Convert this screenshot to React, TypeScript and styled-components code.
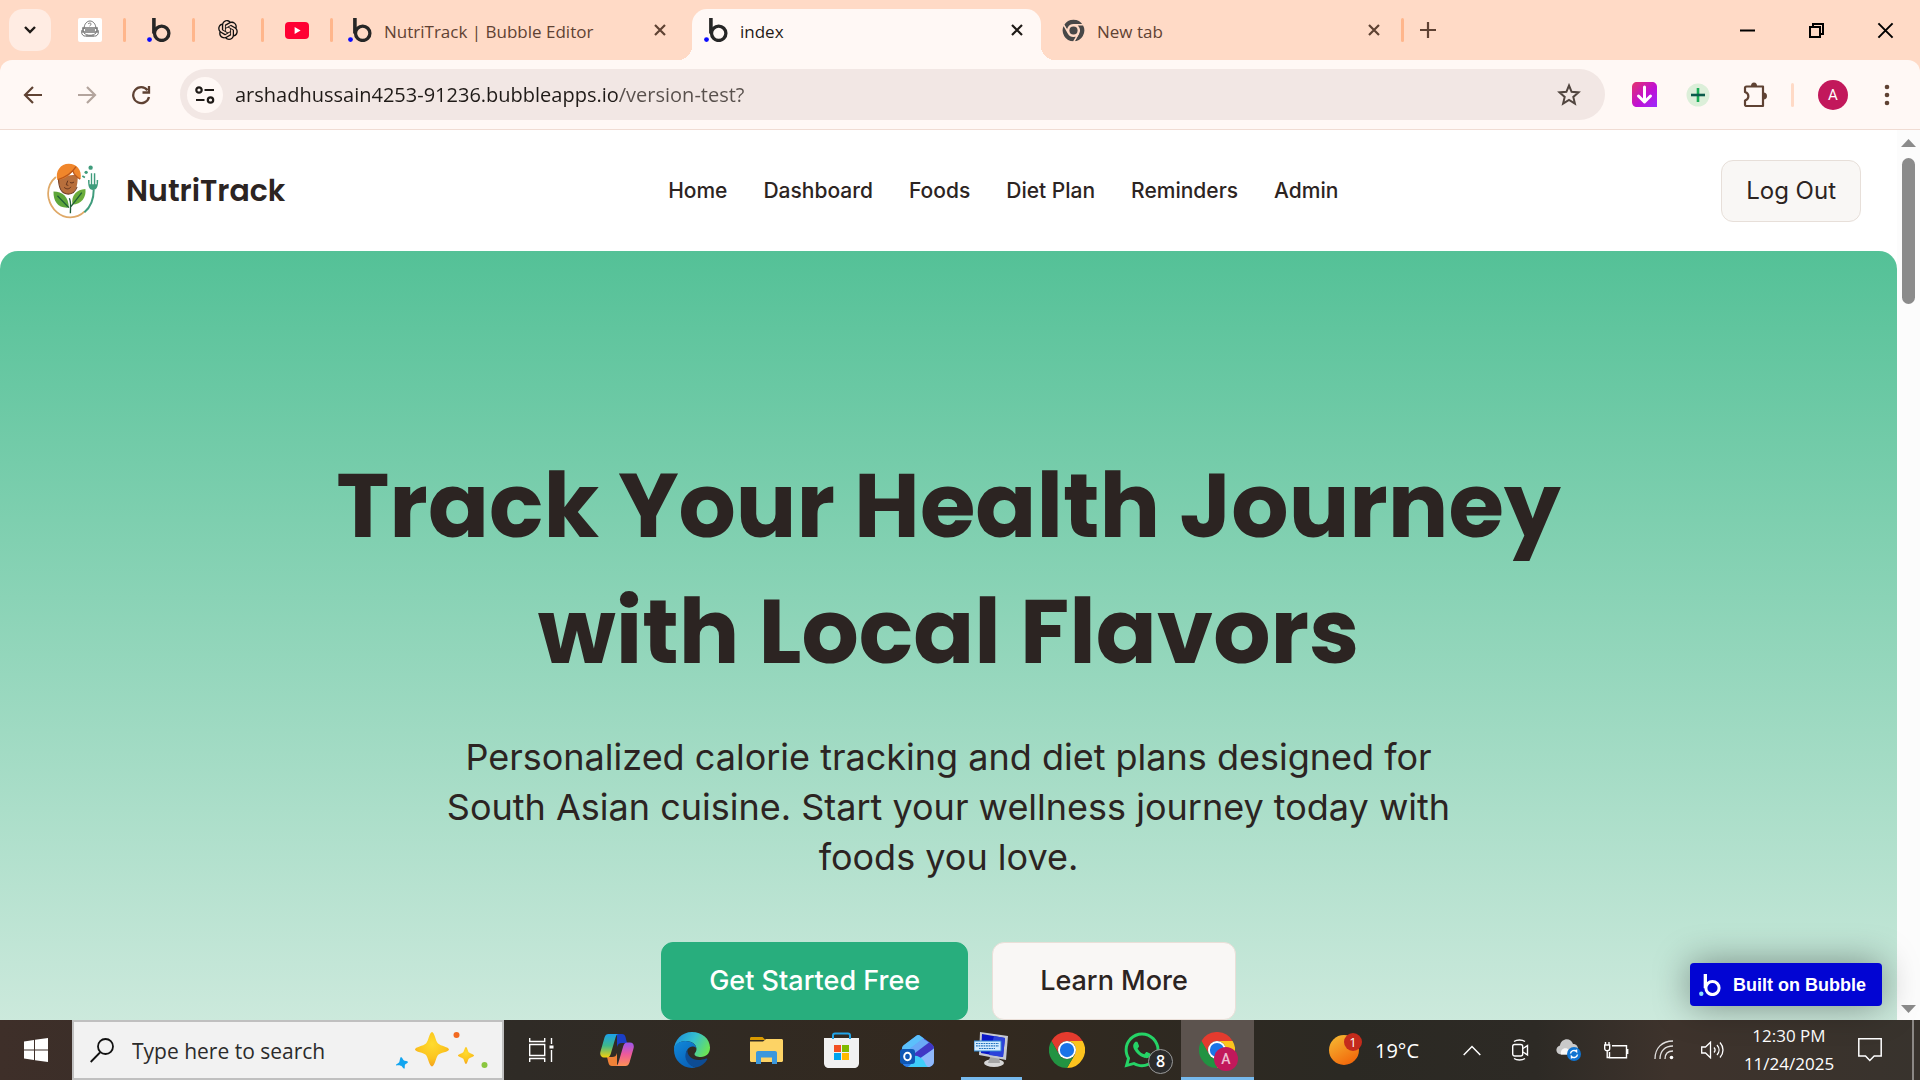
import React from "react";
import styled, { createGlobalStyle, css } from "styled-components";
import { RiOpenaiFill } from "react-icons/ri";
import { FaWhatsapp } from "react-icons/fa";

const ui = `"Segoe UI", "Open Sans", "Noto Sans", sans-serif`;
const body = `Inter, sans-serif`;
const display = `Poppins, Inter, sans-serif`;

const Global = createGlobalStyle`
  *, *::before, *::after { box-sizing: border-box; }
  body { margin: 0; font-family: ${body}; color: #2c2422; }
  button, input { font: inherit; color: inherit; margin: 0; }
  button { border: 0; padding: 0; background: none; cursor: pointer; }
  svg { display: block; flex: none; }
`;

const Screen = styled.div`
  display: flex;
  flex-direction: column;
  height: 100vh;
  overflow: hidden;
`;

/* ---------- browser tab strip ---------- */

const TabStrip = styled.div`
  display: flex;
  align-items: center;
  height: 60px;
  flex: none;
  background: #ffdac6;
  font-family: ${ui};
  font-size: 17px;
  color: #5f4233;
`;

const TabSearch = styled.button`
  display: grid;
  place-items: center;
  width: 42px;
  height: 42px;
  margin: 0 15px 0 9px;
  border-radius: 14px;
  background: #ffece3;
`;

const PinnedTab = styled.button`
  display: grid;
  place-items: center;
  width: 48px;
  height: 42px;
  margin-right: 9px;
`;

const StripRule = styled.span`
  width: 3px;
  height: 24px;
  flex: none;
  border-radius: 2px;
  background: #ffb68c;
`;

const PinnedGap = styled(StripRule)`
  margin-right: 9px;
`;

const Tab = styled.div<{ $active?: boolean; $w: number; $left: number; $right: number }>`
  position: relative;
  display: flex;
  align-items: center;
  width: ${(p) => p.$w}px;
  height: 51px;
  align-self: flex-end;
  padding: 0 ${(p) => p.$right}px 9px ${(p) => p.$left}px;
  ${(p) =>
    p.$active &&
    css`
      background: #fff8f5;
      color: #1f1a17;
      border-radius: 15px 15px 0 0;
      &::before,
      &::after {
        content: "";
        position: absolute;
        bottom: 0;
        width: 14px;
        height: 14px;
      }
      &::before {
        right: 100%;
        background: radial-gradient(circle at 0 0, transparent 14px, #fff8f5 14px);
      }
      &::after {
        left: 100%;
        background: radial-gradient(circle at 100% 0, transparent 14px, #fff8f5 14px);
      }
    `}
`;

const TabLabel = styled.button`
  display: flex;
  align-items: center;
  gap: 12px;
  flex: 1;
  min-width: 0;
  white-space: nowrap;
`;

const TabTitle = styled.span`
  padding-top: 2px;
`;

const TabClose = styled.button`
  display: grid;
  place-items: center;
  width: 24px;
  height: 24px;
`;

const NewTab = styled.button`
  display: grid;
  place-items: center;
  width: 42px;
  height: 42px;
  margin-left: 3px;
`;

const WindowControls = styled.div`
  display: flex;
  margin-left: auto;
`;

const WindowControl = styled.button`
  display: grid;
  place-items: center;
  width: 69px;
  height: 58px;
`;

/* ---------- browser toolbar ---------- */

const ToolbarBack = styled.div`
  flex: none;
  background: #ffdac6;
`;

const Toolbar = styled.div`
  display: flex;
  align-items: center;
  height: 70px;
  padding: 0 11px 0 6px;
  border-bottom: 1px solid #f0dcd3;
  border-radius: 12px 12px 0 0;
  background: #fff8f5;
`;

const ToolButton = styled.button<{ $w?: number }>`
  display: grid;
  place-items: center;
  width: ${(p) => p.$w ?? 54}px;
  height: 48px;
  flex: none;
`;

const Omnibox = styled.div`
  display: flex;
  align-items: center;
  flex: 1;
  height: 51px;
  margin: 0 16px 0 12px;
  padding: 0 12px 0 7px;
  border-radius: 26px;
  background: #f2e7e4;
`;

const SiteInfo = styled.button`
  display: grid;
  place-items: center;
  width: 36px;
  height: 36px;
  flex: none;
  border-radius: 50%;
  background: #fff8f5;
`;

const Address = styled.input`
  flex: 1;
  min-width: 0;
  padding: 0 12px;
  border: 0;
  outline: 0;
  font-family: ${ui};
  font-size: 20px;
  line-height: 30px;
  color: #1f1a17;
  background: linear-gradient(to right, #1f1a17 396px, #58504c 396px);
  -webkit-background-clip: text;
  background-clip: text;
  -webkit-text-fill-color: transparent;
`;

const ToolbarRule = styled(StripRule)`
  margin: 0 8px 0 9px;
  background: #ffdac6;
`;

const Avatar = styled.span`
  display: grid;
  place-items: center;
  width: 30px;
  height: 30px;
  border-radius: 50%;
  background: #c2185b;
  color: #fff;
  font: 15px/30px Roboto, sans-serif;
`;

/* ---------- web page ---------- */

const Viewport = styled.div`
  position: relative;
  display: flex;
  flex: 1;
  min-height: 0;
  background: #fff;
`;

const Page = styled.div`
  flex: 1;
  min-width: 0;
  overflow: hidden;
`;

const Header = styled.header`
  display: flex;
  justify-content: space-between;
  align-items: center;
  height: 121px;
  padding: 0 36px 0 47px;
`;

const Brand = styled.a`
  display: flex;
  align-items: center;
  gap: 26px;
  color: inherit;
  text-decoration: none;
  font: 600 30px/44px ${display};
`;

const Menu = styled.nav`
  display: flex;
  gap: 36px;
`;

const MenuLink = styled.a`
  color: inherit;
  text-decoration: none;
  font: 500 21px/30px ${body};
`;

const LogOut = styled.button`
  height: 62px;
  padding: 0 24px;
  border: 1px solid #e7dfd9;
  border-radius: 12px;
  background: #f9f7f5;
  font: 400 24px/36px ${body};
`;

const Hero = styled.section`
  display: flex;
  flex-direction: column;
  align-items: center;
  padding: 192px 24px 190px;
  border-radius: 18px 18px 0 0;
  background: linear-gradient(#54c197, #cce9dc 770px);
  text-align: center;
`;

const Headline = styled.h1`
  max-width: 1300px;
  margin: 0;
  font: 700 90px/126px ${display};
  color: #2c2422;
`;

const Lead = styled.p`
  max-width: 1040px;
  margin: 37px 0 60px;
  font: 400 36px/50px ${body};
`;

const Actions = styled.div`
  display: flex;
  gap: 24px;
`;

const Action = styled.button<{ $primary?: boolean }>`
  height: 78px;
  padding: 0 47px;
  border: 1px solid ${(p) => (p.$primary ? "#28ae7d" : "#eadfd8")};
  border-radius: 12px;
  background: ${(p) => (p.$primary ? "#28ae7d" : "#f9f7f5")};
  color: ${(p) => (p.$primary ? "#fff" : "#2c2422")};
  font: 500 27px/40px ${body};
`;

const BubbleBadge = styled.a`
  position: absolute;
  right: 38px;
  bottom: 14px;
  display: flex;
  align-items: center;
  gap: 12px;
  height: 43px;
  padding: 0 16px 0 9px;
  border-radius: 4px;
  background: #0205d3;
  box-shadow: 0 0 36px rgba(0, 0, 0, 0.4);
  color: #fff;
  text-decoration: none;
  white-space: nowrap;
  font: 700 18px/24px "Liberation Sans", Arial, sans-serif;
`;

const Scrollbar = styled.div`
  display: flex;
  flex-direction: column;
  align-items: center;
  width: 23px;
  padding: 9px 0 7px;
  flex: none;
  background: #fcfcfc;
`;

const Thumb = styled.div`
  width: 13px;
  height: 146px;
  margin: 11px 0 auto;
  border-radius: 7px;
  background: #8b8b8b;
`;

/* ---------- taskbar ---------- */

const Taskbar = styled.footer`
  display: flex;
  align-items: stretch;
  height: 60px;
  flex: none;
  background: linear-gradient(to right, #3e2f29 0, #2f2b26 27%, #33291f 50%, #2b2923 70%, #2d2a25 80%, #3e332c 87%, #38332d 100%);
  color: #fff;
  font-family: ${ui};
`;

const Start = styled.button`
  display: grid;
  place-items: center;
  width: 72px;
`;

const SearchBox = styled.label`
  display: flex;
  align-items: center;
  width: 432px;
  padding: 0 14px 0 16px;
  border: 2px solid #c0c0c0;
  background: #f2f2f2;
`;

const SearchInput = styled.input`
  flex: 1;
  min-width: 0;
  padding: 2px 0 0 18px;
  border: 0;
  outline: 0;
  background: none;
  font-size: 21px;
  line-height: 30px;
  &::placeholder {
    color: #2b2b2b;
    opacity: 1;
  }
`;

const TaskButton = styled.button<{ $open?: boolean; $active?: boolean }>`
  position: relative;
  display: grid;
  place-items: center;
  width: 75px;
  ${(p) =>
    p.$active &&
    css`
      background: linear-gradient(to right, transparent 2px, #5c534e 2px);
    `}
  ${(p) =>
    (p.$open || p.$active) &&
    css`
      &::after {
        content: "";
        position: absolute;
        left: ${p.$active ? 2 : 7}px;
        right: ${p.$active ? 0 : 7}px;
        bottom: 0;
        height: 3px;
        background: #76b9ed;
      }
    `}
`;

const CountBadge = styled.span`
  position: absolute;
  left: 44px;
  top: 29px;
  width: 25px;
  height: 25px;
  border: 1px solid #9a9a9a;
  border-radius: 50%;
  background: #2b2b2b;
  font-size: 16px;
  font-weight: 600;
  line-height: 23px;
  text-align: center;
`;

const ProfileBadge = styled(CountBadge)`
  left: 35px;
  top: 27px;
  width: 24px;
  height: 24px;
  border: 0;
  background: #c2185b;
  color: #eebdd0;
  font: 500 14px/24px Roboto, sans-serif;
`;

const Tray = styled.div`
  display: flex;
  align-items: center;
  margin-left: auto;
`;

const Weather = styled.button`
  display: flex;
  align-items: center;
  gap: 13px;
  height: 60px;
  padding-right: 29px;
  font-size: 20px;
`;

const TrayButton = styled.button`
  display: grid;
  place-items: center;
  width: 48px;
  height: 60px;
`;

const Clock = styled.button`
  width: 106px;
  height: 60px;
  font-size: 17px;
  line-height: 28px;
  text-align: center;
`;

const Notices = styled(TrayButton)`
  width: 56px;
  margin-right: 14px;
`;

const ShowDesktop = styled.button`
  width: 8px;
  height: 60px;
  border-left: 2px solid #8b8885;
`;

/* ---------- drawings ---------- */

const BubbleMark = ({ ink = "#262626", dot = "#0a0aff", size = 24 }) => (
  <svg width={size} height={size} viewBox="0 0 24 24" fill="none">
    <circle cx="2.5" cy="21.6" r="2.4" fill={dot} />
    <path d="M6.9 0v15.5" stroke={ink} strokeWidth="3.6" />
    <circle cx="14.7" cy="15.3" r="7.2" stroke={ink} strokeWidth="3.3" />
  </svg>
);

const Cross = ({ c = "#5f4233", s = 12, w = 2.2 }) => (
  <svg width={s} height={s} viewBox="0 0 12 12" stroke={c} strokeWidth={w}>
    <path d="M1 1l10 10M11 1L1 11" />
  </svg>
);

const ChatBotMark = () => (
  <svg width="24" height="24" viewBox="0 0 24 24" fill="none" stroke="#777" strokeWidth="1">
    <rect width="24" height="24" rx="2" fill="#fff" stroke="none" />
    <path d="M6 11c0-5 3-8 6-8s6 3 6 8" />
    <path d="M10 6c1-1.500 4-1 3 .6L11.500 8" />
    <path d="M5 10h14v4H5zM7 12h10" strokeWidth="1.600" />
    <path d="M4 12c-1 3 0 5 2 6h12c2-1 3-3 2-6M6 15c3 3 9 3 12 0M8 18h8" />
  </svg>
);

const YouTubeMark = () => (
  <svg width="24" height="17" viewBox="0 0 24 17">
    <rect width="24" height="17" rx="4" fill="#ff0033" />
    <path d="M9.600 5v7l6-3.500z" fill="#fff" />
  </svg>
);

const ChromeMark = ({ size = 36, mono = false }) => {
  const line = mono ? { stroke: "#ffdac6", strokeWidth: 3 } : {};
  return (
    <svg width={size} height={size} viewBox="0 0 48 48">
      <path {...line} fill={mono ? "#474747" : "#e33b2e"} d="M24 12h20.800A24 24 0 0 0 3.200 12l10.400 18A12 12 0 0 1 24 12z" />
      <path {...line} fill={mono ? "#474747" : "#fcc31e"} d="M34.400 30L24 48a24 24 0 0 0 20.800-36H24a12 12 0 0 1 10.400 18z" />
      <path {...line} fill={mono ? "#474747" : "#229342"} d="M13.600 30L3.200 12A24 24 0 0 0 24 48l10.400-18a12 12 0 0 1-20.800 0z" />
      <circle cx="24" cy="24" r="12" fill={mono ? "#ffdac6" : "#fff"} />
      <circle cx="24" cy="24" r={mono ? 8.5 : 9.5} fill={mono ? "#474747" : "#1a73e8"} />
    </svg>
  );
};

const NutriLogo = () => (
  <svg width="53" height="56" viewBox="0 0 51 54" fill="none">
    <path d="M8.500 13.500C2 19 0 26 1.500 34 4 45 13 52.500 22.500 52.500c5 0 10-2 13.500-5.500" stroke="#dfa968" strokeWidth="1.700" />
    <path d="M36 47.500c6-5 9-12 9-22" stroke="#3f9c7c" strokeWidth="1.900" />
    <path d="M39.500 16.500c0 8 2 9.500 4.800 9.500s5-1.500 5-9.500h-1.500v4h-1.300V10h-1.400v10.500h-1.600V10h-1.300v10.500h-1.200v-4z" fill="#3f9c7c" />
    <circle cx="42" cy="4.500" r="2.100" fill="#3f9c7c" />
    <circle cx="37.700" cy="9" r="1.600" fill="#3f9c7c" />
    <path d="M34 12.500l2.500 1.500" stroke="#3f9c7c" strokeWidth="1.600" />
    <path d="M11 13c0 10 3 17 9.500 17S30 23 29.500 11z" fill="#b86f3c" />
    <path d="M11 14c0 10 3 16 9.500 16 4 0 7-3 8.500-7" stroke="#6e3a20" strokeWidth="1" />
    <path d="M22 18.500c1 1 3 1 4-.3M16.500 23.500c2 2 5 2 6.500-.5M20 17l-1.500 4 2 .6" stroke="#5d2f1b" strokeWidth=".9" />
    <path d="M10 16.500C7.500 8 13 .7 21 .7 28 .7 34 6 32.300 15.500c-4-2-6-5.500-7.300-7.500-3 4-9 8-15 8.500z" fill="#f0862b" />
    <path d="M10.500 16C17 14 24 9.500 28 3.500M25 8c1 3 4 6 7 7.500" stroke="#b9561a" strokeWidth="1.200" />
    <path d="M6.200 27.500c9 0 14.500 5 14.800 15.500C10.500 44 6 37 6.200 27.500z" fill="#5da63a" />
    <path d="M37 25c1 8-4 15-12.500 15C23 31 28.500 25.500 37 25z" fill="#6aad3b" />
    <path d="M10 31.500l11 11.500M33.500 28.500L23 42M21.500 34c2 4 1 9 1 14.500" stroke="#1f5e38" strokeWidth="1.300" />
  </svg>
);

const EdgeMark = () => (
  <svg width="36" height="36" viewBox="0 0 36 36">
    <defs>
      <linearGradient id="edgeTop" x1="0" y1="0.2" x2="1" y2="0.6">
        <stop offset="0" stopColor="#1b8fdc" />
        <stop offset=".5" stopColor="#35bfd0" />
        <stop offset="1" stopColor="#6be356" />
      </linearGradient>
      <linearGradient id="edgeBody" x1="0" y1="0" x2=".6" y2="1">
        <stop offset="0" stopColor="#1089da" />
        <stop offset="1" stopColor="#0a62b8" />
      </linearGradient>
    </defs>
    <path d="M0 18C0 8 8 0 18 0s18 7 18 15.500c0 6-4 9.500-9 9.500-4 0-6.500-1.200-6.500-3 0-1 2-2 2-5 0-4-4-8-10.500-8C5 9 1 13 0 18z" fill="url(#edgeTop)" />
    <path d="M0 18C0 12.500 5 9 11.500 9c6 0 10 3 10.900 7C17 12 12 17 12 22.500 12 29 16 34 22 35.500 10 38 0 29 0 18z" fill="url(#edgeBody)" />
    <path d="M13.500 17.500C8 25 14 35 23 35.300c4-1 8-4 10.200-7.800.5-1-.4-1.300-1.200-1C22 30.500 12.500 26 13.500 17.500z" fill="#0d4c94" />
  </svg>
);

const CopilotMark = () => (
  <svg width="34" height="32" viewBox="0 0 34 32">
    <defs>
      <linearGradient id="copA" x1="0" y1="0" x2="0" y2="1">
        <stop offset="0" stopColor="#1ba0ea" />
        <stop offset=".5" stopColor="#3fb88a" />
        <stop offset="1" stopColor="#f5d10d" />
      </linearGradient>
      <linearGradient id="copB" x1="0" y1="0" x2="0" y2="1">
        <stop offset="0" stopColor="#9a55ee" />
        <stop offset=".5" stopColor="#ee5a9a" />
        <stop offset="1" stopColor="#fd9155" />
      </linearGradient>
    </defs>
    <path d="M17 0h5c2 0 3 1 3.500 3l1.500 6h-5c-3 0-4 1-5 4z" fill="#1a3fc6" />
    <path d="M17 32h-5c-2 0-3-1-3.500-3L7 23h5c3 0 4-1 5-4z" fill="#f08238" />
    <path d="M8.500 0h10.200c-1.500 0-2.400 1-3 3l-5 17c-.8 2.500-2 3.500-4 3.500H4C1 23.500-.5 21 .5 17.500l4-14C5.300 1 6.500 0 8.500 0z" fill="url(#copA)" />
    <path d="M25.500 32H15.300c1.500 0 2.400-1 3-3l5-17c.8-2.500 2-3.500 4-3.500H30c3 0 4.500 2.500 3.500 6l-4 14c-.8 2.500-2 3.500-4 3.500z" fill="url(#copB)" />
  </svg>
);

const FolderMark = () => (
  <svg width="33" height="27" viewBox="0 0 33 27">
    <path d="M0 1.500C0 .6.600 0 1.500 0h11l3 3H0z" fill="#d99a00" />
    <path d="M0 4.500h13l3-2.500h15.500c.9 0 1.500.6 1.500 1.500v20c0 .9-.6 1.500-1.500 1.500h-30C.6 25 0 24.400 0 23.500z" fill="#fdd365" />
    <path d="M6 27V16c0-1.200.8-2 2-2h17c1.200 0 2 .8 2 2v11h-5v-6.500H11V27z" fill="#3b97dc" />
  </svg>
);

const StoreMark = () => (
  <svg width="35" height="36" viewBox="0 0 35 36">
    <path d="M9 9V3.500C9 2 9.500 1.500 11 1.500h13c1.500 0 2 .5 2 2V9" fill="none" stroke="#22a4e8" strokeWidth="2" />
    <path d="M0 6h35v25c0 3-2 5-5 5H5c-3 0-5-2-5-5z" fill="#f1f1f1" />
    <path d="M9 7V4M26 7V4" stroke="#22a4e8" strokeWidth="2" />
    <path d="M10 13h7v7h-7z" fill="#f25022" />
    <path d="M18 13h7v7h-7z" fill="#7fba00" />
    <path d="M10 21h7v7h-7z" fill="#00a4ef" />
    <path d="M18 21h7v7h-7z" fill="#ffb900" />
  </svg>
);

const OutlookMark = () => (
  <svg width="34" height="33" viewBox="0 0 34 33">
    <path d="M2 13L16 2c1.500-1.200 3-1.200 4.500 0L31 9.500c2 1.500 3 3 3 5.500v12c0 3.500-2.500 6-6 6H8c-3.500 0-6-2.500-6-6z" fill="#2b7de9" />
    <path d="M2 16c0-3 .5-4 2.500-5.500L16 2c1.500-1.200 3-1.200 4.500 0L24 4.500 6 18z" fill="#5cc0fb" />
    <path d="M24 4.500l7 5c3.500 2.500 4 5 0 7.500L17 26l-9-6.500z" fill="#4136c4" />
    <path d="M6 17.500L23 4.500l6 4L11 22z" fill="#6aa9f7" />
    <path d="M34 14.500V27c0 3.500-2.500 6-6 6H8z" fill="#8fb8fb" />
    <path d="M12 22c5-1 9 1 12 5 1.500 3 2 5 4 6H8c3-1 4-5 4-11z" fill="#3fcdfa" />
    <rect y="15" width="15" height="15" rx="3" fill="#0f57b5" />
    <ellipse cx="7.500" cy="22.500" rx="3.300" ry="3.800" fill="none" stroke="#fff" strokeWidth="2" />
  </svg>
);

const MonitorMark = () => (
  <svg width="36" height="36" viewBox="0 0 36 36">
    <ellipse cx="20" cy="31" rx="10" ry="4" fill="#d6d6d6" />
    <path d="M16 25h9l1 6H14z" fill="#a5a5a5" />
    <path d="M6 0l28 4-2 24L5 23z" fill="#c5c8d0" />
    <path d="M8 2l23 4-2 19L7 21z" fill="#0a16c8" />
    <path d="M20 4l11 2-2 19-14-2z" fill="#2c42da" />
    <path d="M0 9h27v10H0z" fill="#d5ecff" stroke="#2e86d0" />
    <path d="M2 11.500h23M2 13.900h23M5 16.500h16" stroke="#2476c0" strokeWidth="1.200" strokeDasharray="1.800 .7" />
  </svg>
);

const Sparkles = () => (
  <svg width="92" height="40" viewBox="0 0 92 40">
    <defs>
      <radialGradient id="gold" cx=".5" cy=".35" r=".7">
        <stop offset="0" stopColor="#ffdb2e" />
        <stop offset=".6" stopColor="#fbc41f" />
        <stop offset="1" stopColor="#f39a1d" />
      </radialGradient>
    </defs>
    <path d="M36 2c2.500 0 3.500 9 6 11.500S53 17 53 19.500 44 22.500 42 25s-3.500 11.500-6 11.500-4-9-6-11.500-11-3-11-5.500 8.500-3.500 11-6S33.500 2 36 2z" fill="url(#gold)" />
    <path d="M70 17c1.300 0 1.800 4.500 3 5.500s5 1.800 5 3-3.800 2-5 3-1.700 5.500-3 5.500-1.800-4.500-3-5.500-5-1.800-5-3 3.800-2 5-3 1.700-5.500 3-5.500z" fill="url(#gold)" />
    <path d="M5 27c1 0 2 3 3 3.500s4 .5 4 1.500-2.500 1.800-3 2.800.2 4-.8 4-2-2.500-3-3S0 36 0 35s2.500-1.800 3.200-2.800S4 27 5 27z" fill="#12a5f0" />
    <circle cx="60.500" cy="5" r="3" fill="#f26a21" />
    <circle cx="88.500" cy="35" r="3" fill="#8ac63f" />
  </svg>
);

/* ---------- app ---------- */

const links = ["Home", "Dashboard", "Foods", "Diet Plan", "Reminders", "Admin"];

const pinned = [
  { name: "Assistant", icon: <ChatBotMark /> },
  { name: "Bubble", icon: <BubbleMark /> },
  { name: "ChatGPT", icon: <RiOpenaiFill size={24} color="#111" /> },
  { name: "YouTube", icon: <YouTubeMark /> },
];

const Browser = () => (
  <>
    <TabStrip>
      <TabSearch aria-label="Search tabs">
        <svg width="12" height="8" viewBox="0 0 12 8" fill="none" stroke="#1f1a17" strokeWidth="2.400"><path d="M1 1l5 5 5-5" /></svg>
      </TabSearch>
      {pinned.map((t) => (
        <React.Fragment key={t.name}>
          <PinnedTab aria-label={t.name}>{t.icon}</PinnedTab>
          <PinnedGap />
        </React.Fragment>
      ))}
      <Tab $w={350} $left={6} $right={20}>
        <TabLabel><BubbleMark /><TabTitle>NutriTrack | Bubble Editor</TabTitle></TabLabel>
        <TabClose aria-label="Close NutriTrack tab"><Cross /></TabClose>
      </Tab>
      <Tab $active $w={349} $left={12} $right={12}>
        <TabLabel><BubbleMark /><TabTitle>index</TabTitle></TabLabel>
        <TabClose aria-label="Close index tab"><Cross c="#1f1a17" /></TabClose>
      </Tab>
      <Tab $w={360} $left={21} $right={15}>
        <TabLabel><ChromeMark size={23} mono /><TabTitle>New tab</TabTitle></TabLabel>
        <TabClose aria-label="Close new tab"><Cross /></TabClose>
      </Tab>
      <StripRule />
      <NewTab aria-label="New tab">
        <svg width="16" height="16" stroke="#5f4233" strokeWidth="2.200"><path d="M8 0v16M0 8h16" /></svg>
      </NewTab>
      <WindowControls>
        <WindowControl aria-label="Minimize">
          <svg width="15" height="15"><path d="M0 6.500h15v2H0z" /></svg>
        </WindowControl>
        <WindowControl aria-label="Restore">
          <svg width="15" height="15" fill="none" stroke="#000" strokeWidth="2"><path d="M1 4h10v10H1zM4 4V1h10v10h-3" /></svg>
        </WindowControl>
        <WindowControl aria-label="Close"><Cross c="#000" s={17} w={1.4} /></WindowControl>
      </WindowControls>
    </TabStrip>
    <ToolbarBack>
      <Toolbar>
        <ToolButton aria-label="Back">
          <svg width="20" height="18" fill="none" stroke="#5f4233" strokeWidth="2.200"><path d="M19 9H2M10 1L2 9l8 8" /></svg>
        </ToolButton>
        <ToolButton aria-label="Forward">
          <svg width="20" height="18" fill="none" stroke="#b3a49d" strokeWidth="2.200"><path d="M1 9h17M10 1l8 8-8 8" /></svg>
        </ToolButton>
        <ToolButton aria-label="Reload">
          <svg width="20" height="20" fill="none" stroke="#5f4233" strokeWidth="2.300"><path d="M16.500 5.200A8 8 0 1 0 18 12M18 1v6.500h-6.500" /></svg>
        </ToolButton>
        <Omnibox>
          <SiteInfo aria-label="Site information">
            <svg width="20" height="18" fill="none" stroke="#1f1a17" strokeWidth="2.200">
              <circle cx="4" cy="4" r="2.700" /><path d="M9.500 4H19M1 14h8.500" /><circle cx="15.500" cy="14" r="2.700" />
            </svg>
          </SiteInfo>
          <Address aria-label="Address" defaultValue="arshadhussain4253-91236.bubbleapps.io/version-test?" />
          <ToolButton $w={48} aria-label="Bookmark">
            <svg width="24" height="23" viewBox="0 0 24 23" fill="none" stroke="#51453f" strokeWidth="2"><path d="M12 2.500l2.600 6.300 6.900.6-5.200 4.500 1.600 6.700-5.900-3.600-5.900 3.600 1.600-6.700-5.200-4.500 6.900-.6z" /></svg>
          </ToolButton>
        </Omnibox>
        <ToolButton $w={47} aria-label="Downloader">
          <svg width="25" height="25" viewBox="0 0 25 25" fill="none">
            <defs><linearGradient id="dl" x1="0" y1="0" x2="1" y2="1"><stop offset="0" stopColor="#e5356b" /><stop offset=".55" stopColor="#c010d2" /><stop offset="1" stopColor="#9a2bff" /></linearGradient></defs>
            <path d="M5 0h15c3 0 5 2 5 5v20H5c-3 0-5-2-5-5V5c0-3 2-5 5-5z" fill="url(#dl)" />
            <path d="M12.500 5v14M6.500 14l6 6 6-6" stroke="#fff" strokeWidth="3" strokeLinecap="round" strokeLinejoin="round" />
          </svg>
        </ToolButton>
        <ToolButton $w={60} aria-label="Add">
          <svg width="24" height="24"><circle cx="12" cy="12" r="11.500" fill="#dcefd9" /><path d="M12 5v14" stroke="#18ab55" strokeWidth="2.600" /><path d="M5 12h14" stroke="#0b5a4a" strokeWidth="2.600" /></svg>
        </ToolButton>
        <ToolButton aria-label="Extensions">
          <svg width="25" height="26" viewBox="0 0 25 26">
            <path d="M3.500 4.500H20V24H3.500c-.8 0-1.500-.5-1.500-1.300V18.500C6.500 17 6.500 11.500 2 10V6c0-.9.600-1.500 1.500-1.500z" fill="none" stroke="#5f4233" strokeWidth="2.200" strokeLinejoin="round" />
            <path d="M8 4a3 3.500 0 0 1 6 0zM20.500 10.500a3.500 3.500 0 0 1 0 7z" fill="#5f4233" />
          </svg>
        </ToolButton>
        <ToolbarRule />
        <ToolButton $w={62} aria-label="Profile"><Avatar>A</Avatar></ToolButton>
        <ToolButton $w={45} aria-label="Menu">
          <svg width="6" height="22" fill="#5f4233"><circle cx="3" cy="3" r="2.300" /><circle cx="3" cy="11" r="2.300" /><circle cx="3" cy="19" r="2.300" /></svg>
        </ToolButton>
      </Toolbar>
    </ToolbarBack>
  </>
);

const Site = () => (
  <Viewport>
    <Page>
      <Header>
        <Brand href="#"><NutriLogo />NutriTrack</Brand>
        <Menu>
          {links.map((l) => <MenuLink href="#" key={l}>{l}</MenuLink>)}
        </Menu>
        <LogOut>Log Out</LogOut>
      </Header>
      <Hero>
        <Headline>Track Your Health Journey with Local Flavors</Headline>
        <Lead>
          Personalized calorie tracking and diet plans designed for South Asian cuisine. Start your wellness journey today with foods you love.
        </Lead>
        <Actions>
          <Action $primary>Get Started Free</Action>
          <Action>Learn More</Action>
        </Actions>
      </Hero>
    </Page>
    <Scrollbar>
      <svg width="15" height="8" fill="#8b8b8b"><path d="M7.500 0L15 8H0z" /></svg>
      <Thumb />
      <svg width="15" height="8" fill="#8b8b8b"><path d="M0 0h15L7.500 8z" /></svg>
    </Scrollbar>
    <BubbleBadge href="#"><BubbleMark ink="#fff" dot="#8fe3ff" size={22} />Built on Bubble</BubbleBadge>
  </Viewport>
);

const Desktop = () => (
  <Taskbar>
    <Start aria-label="Start">
      <svg width="24" height="24" fill="#fff"><path d="M0 3.500L10 2v9.500H0zM11 1.800L24 0v11.500H11zM0 12.500h10V22L0 20.500zM11 12.500h13V24l-13-1.800z" /></svg>
    </Start>
    <SearchBox>
      <svg width="24" height="25" fill="none" stroke="#111" strokeWidth="1.800"><circle cx="15.500" cy="8.500" r="7.500" /><path d="M10 14.500L.7 24" /></svg>
      <SearchInput aria-label="Search" placeholder="Type here to search" />
      <Sparkles />
    </SearchBox>
    <TaskButton aria-label="Task view">
      <svg width="25" height="24" fill="none" stroke="#fff" strokeWidth="1.400"><path d="M.7 0v3.500h15V0M.7 6.500h15v11H.7zM.7 24v-3.500h15V24M22.500 0v6M22.500 12v12" /><path d="M20.500 7.500h4v3h-4z" fill="#fff" stroke="none" /></svg>
    </TaskButton>
    <TaskButton aria-label="Copilot"><CopilotMark /></TaskButton>
    <TaskButton aria-label="Edge"><EdgeMark /></TaskButton>
    <TaskButton aria-label="File Explorer"><FolderMark /></TaskButton>
    <TaskButton aria-label="Store"><StoreMark /></TaskButton>
    <TaskButton aria-label="Outlook"><OutlookMark /></TaskButton>
    <TaskButton $open aria-label="On-screen keyboard"><MonitorMark /></TaskButton>
    <TaskButton aria-label="Chrome"><ChromeMark /></TaskButton>
    <TaskButton aria-label="WhatsApp">
      <FaWhatsapp size={40} color="#25d366" />
      <CountBadge>8</CountBadge>
    </TaskButton>
    <TaskButton $active aria-label="Chrome, profile A">
      <ChromeMark />
      <ProfileBadge>A</ProfileBadge>
    </TaskButton>
    <Tray>
      <Weather>
        <svg width="33" height="34" viewBox="0 0 33 34">
          <defs><linearGradient id="sun" x1="0" y1="0" x2=".6" y2="1"><stop offset="0" stopColor="#f5bd35" /><stop offset="1" stopColor="#f26a0c" /></linearGradient></defs>
          <circle cx="15" cy="17" r="15" fill="url(#sun)" />
          <circle cx="24" cy="9" r="9" fill="#c42b1c" />
          <text x="24" y="14" fill="#fff" fontSize="13" textAnchor="middle">1</text>
        </svg>
        19°C
      </Weather>
      <TrayButton aria-label="Show hidden icons">
        <svg width="18" height="11" fill="none" stroke="#fff" strokeWidth="1.500"><path d="M.7 10L9 1.500l8.300 8.500" /></svg>
      </TrayButton>
      <TrayButton aria-label="Meet now">
        <svg width="17" height="22" fill="none" stroke="#fff" strokeWidth="1.400"><rect x=".7" y="5.500" width="10" height="11.500" rx="2" /><path d="M11 9.500l4.500-3v9.500l-4.500-3M2 2.500c3-2 8-2 11 0M2 19.500c3 2 8 2 11 0" /></svg>
      </TrayButton>
      <TrayButton aria-label="OneDrive">
        <svg width="25" height="22" viewBox="0 0 25 22"><path d="M5 15.500C-1 15-1 8 4 6.500 5-1 15-2 17 5c5 0 6 5 4 8l-5 2.500z" fill="#c9c9c9" /><path d="M5 15.500c-1-4 2-7 6-6l6 4-4 2z" fill="#f7f7f7" /><circle cx="18" cy="15" r="7" fill="#0f74d1" /><path d="M14.500 14.500c.5-3 4-4 6-2v-2M21.500 15.500c-.5 3-4 4-6 2v2" fill="none" stroke="#fff" strokeWidth="1.500" /></svg>
      </TrayButton>
      <TrayButton aria-label="Battery">
        <svg width="25" height="17" fill="none" stroke="#fff" strokeWidth="1.400"><path d="M8 3.700H22.500v12h-17V10M23.700 7v5M1.500 0v3M5 0v3M.7 3h5v3.500c0 3-5 3-5 0zM3.200 9v6.500h2" /></svg>
      </TrayButton>
      <TrayButton aria-label="Network">
        <svg width="20" height="20" fill="none" stroke="#fff" strokeWidth="1.300"><path d="M1 19C1 8 8 1 19 1M6 19c0-8 5-13 13-13M11 19c0-5 3-8 8-8" opacity=".85" /><circle cx="17.500" cy="17.500" r="1.800" fill="#fff" stroke="none" /></svg>
      </TrayButton>
      <TrayButton aria-label="Volume">
        <svg width="23" height="18" fill="none" stroke="#fff" strokeWidth="1.300"><path d="M.7 6h3.800l5-4.800v15.600l-5-4.800H.7zM13 6.500c1.300 1.500 1.300 3.500 0 5M16 4c2.700 3 2.700 7 0 10M19 1.500c4 4.500 4 10.500 0 15" /></svg>
      </TrayButton>
      <Clock>12:30 PM<br />11/24/2025</Clock>
      <Notices aria-label="Notifications">
        <svg width="24" height="24" fill="none" stroke="#fff" strokeWidth="1.500"><path d="M.8.8h22.400V18h-7l-4.400 4.500L7.500 18H.8z" /></svg>
      </Notices>
      <ShowDesktop aria-label="Show desktop" />
    </Tray>
  </Taskbar>
);

export default function App() {
  return (
    <Screen>
      <Global />
      <Browser />
      <Site />
      <Desktop />
    </Screen>
  );
}
